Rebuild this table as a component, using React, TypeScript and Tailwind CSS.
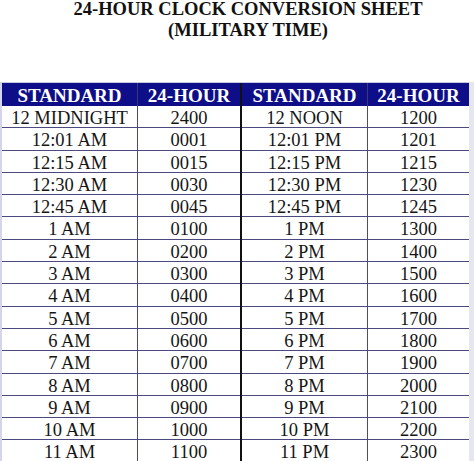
import React from "react";

const rows: [string, string, string, string][] = [
  ["12 MIDNIGHT", "2400", "12 NOON", "1200"],
  ["12:01 AM", "0001", "12:01 PM", "1201"],
  ["12:15 AM", "0015", "12:15 PM", "1215"],
  ["12:30 AM", "0030", "12:30 PM", "1230"],
  ["12:45 AM", "0045", "12:45 PM", "1245"],
  ["1 AM", "0100", "1 PM", "1300"],
  ["2 AM", "0200", "2 PM", "1400"],
  ["3 AM", "0300", "3 PM", "1500"],
  ["4 AM", "0400", "4 PM", "1600"],
  ["5 AM", "0500", "5 PM", "1700"],
  ["6 AM", "0600", "6 PM", "1800"],
  ["7 AM", "0700", "7 PM", "1900"],
  ["8 AM", "0800", "8 PM", "2000"],
  ["9 AM", "0900", "9 PM", "2100"],
  ["10 AM", "1000", "10 PM", "2200"],
  ["11 AM", "1100", "11 PM", "2300"],
];

export default function App() {
  return (
    <div
      className="w-[474px] h-[461px] bg-white overflow-hidden flex flex-col"
      style={{ fontFamily: '"Liberation Serif", "Times New Roman", serif' }}
    >
      <div className="pl-[22px] text-center font-bold text-[18.5px] leading-[21px] text-[#111] mt-[-1px]">
        <div>24-HOUR CLOCK CONVERSION SHEET</div>
        <div>(MILITARY TIME)</div>
      </div>
      <div className="mt-[41px] flex">
        <div className="w-[469px] border-l-2 border-[#d4d4ec] border-t border-t-[#c8c8e4]">
          <div className="grid grid-cols-[136px_104px_126px_101px] h-[23px] bg-[#0e0e88] text-white font-bold text-[19px] leading-[23px] text-center">
            <div className="border-r border-[#3a3a7a] pt-[1px]">STANDARD</div>
            <div className="border-r-2 border-[#111] pt-[1px]">24-HOUR</div>
            <div className="border-r border-[#3a3a7a] pt-[1px]">STANDARD</div>
            <div className="pt-[1px]">24-HOUR</div>
          </div>
          {rows.map((r, i) => (
            <div
              key={i}
              className="grid grid-cols-[136px_104px_126px_101px] h-[22.3px] border-b border-[#4a4a80] text-[18.5px] leading-[22px] text-center text-[#151515]"
            >
              <div className="border-r border-[#4a4a80] pt-[1px]">{r[0]}</div>
              <div className="border-r-2 border-[#111] pt-[1px]">{r[1]}</div>
              <div className="border-r border-[#4a4a80] pt-[1px]">{r[2]}</div>
              <div className="pt-[1px]">{r[3]}</div>
            </div>
          ))}
        </div>
        <div className="flex-1 bg-[#e6e6f0]" />
      </div>
    </div>
  );
}
